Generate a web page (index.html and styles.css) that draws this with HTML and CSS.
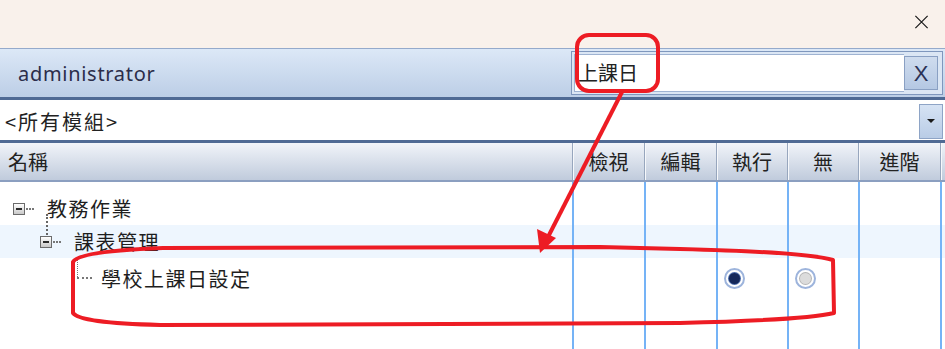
FILE: index.html
```html
<!DOCTYPE html>
<html lang="zh-Hant">
<head>
  <meta charset="UTF-8">
  <title>權限設定</title>
  <link rel="stylesheet" href="styles.css">
</head>
<body>
  <div class="window">
    <div class="titlebar">
      <svg class="close" width="16" height="16" viewBox="0 0 16 16">
        <path d="M1 1 L15 15 M15 1 L1 15" stroke="#1a1a1a" stroke-width="1.4" fill="none"/>
      </svg>
    </div>

    <div class="userbar">
      <span class="user">administrator</span>
      <div class="search">
        <div class="search-field">上課日</div>
        <div class="search-clear">X</div>
      </div>
    </div>

    <div class="module">
      <span class="module-text">&lt;所有模組&gt;</span>
      <div class="drop-btn"><span class="caret"></span></div>
    </div>

    <div class="grid-head">
      <div class="cell name">名稱</div>
      <div class="cell">檢視</div>
      <div class="cell">編輯</div>
      <div class="cell">執行</div>
      <div class="cell">無</div>
      <div class="cell">進階</div>
      <div class="cell"></div>
    </div>

    <div class="grid-body">
      <div class="row spacer">
        <div class="cell name"></div>
        <div class="cell"></div><div class="cell"></div><div class="cell"></div>
        <div class="cell"></div><div class="cell"></div><div class="cell"></div>
      </div>
      <div class="row r1">
        <div class="cell name">
          <span class="node lvl0"><span class="toggle"></span><span class="dots"></span></span>教務作業
        </div>
        <div class="cell"></div><div class="cell"></div><div class="cell"></div>
        <div class="cell"></div><div class="cell"></div><div class="cell"></div>
      </div>
      <div class="row r2 selected">
        <div class="cell name">
          <span class="vline"></span>
          <span class="node lvl1"><span class="toggle"></span><span class="dots"></span></span>課表管理
        </div>
        <div class="cell"></div><div class="cell"></div><div class="cell"></div>
        <div class="cell"></div><div class="cell"></div><div class="cell"></div>
      </div>
      <div class="row r3">
        <div class="cell name">
          <span class="node lvl2"><span class="elbow"></span></span>學校上課日設定
        </div>
        <div class="cell"></div>
        <div class="cell"></div>
        <div class="cell choice"><span class="radio on"></span></div>
        <div class="cell choice"><span class="radio off"></span></div>
        <div class="cell"></div>
        <div class="cell"></div>
      </div>
      <div class="row filler">
        <div class="cell name"></div>
        <div class="cell"></div><div class="cell"></div><div class="cell"></div>
        <div class="cell"></div><div class="cell"></div><div class="cell"></div>
      </div>
    </div>

    <!-- red markup drawn on top of the screenshot -->
    <svg class="markup" width="945" height="349" viewBox="0 0 945 349">
      <g fill="none" stroke="#ed1c24" stroke-width="4" stroke-linejoin="round">
        <rect x="577" y="35" width="81" height="56" rx="12"/>
        <line x1="622" y1="92" x2="548" y2="237"/>
        <path d="M163 248 L600 247 L680 249 Q805 252 833 260 L834 313 Q805 320 680 323 L160 325 Q80 323 73 313 L73 262 Q79 251 163 248 Z"/>
      </g>
      <polygon points="540,253 537,229 556,238" fill="#ed1c24"/>
    </svg>
  </div>
</body>
</html>
```

FILE: styles.css
```css
* {
  box-sizing: border-box;
}

html, body {
  margin: 0;
  height: 100%;
}

body {
  font-family: "Noto Sans", "Noto Sans CJK TC", sans-serif;
  color: #1e1e1e;
  background: #ffffff;
}

.window {
  position: relative;
  width: 945px;
  height: 349px;
  display: flex;
  flex-direction: column;
  overflow: hidden;
}

.titlebar {
  height: 48px;
  flex: none;
  background: #f9f1eb;
  display: flex;
  justify-content: flex-end;
  align-items: center;
  padding-right: 16px;
}

.close {
  width: 15px;
  height: 14px;
  margin-top: -4px;
}

/* user bar with search box */
.userbar {
  height: 52px;
  flex: none;
  display: flex;
  align-items: center;
  justify-content: space-between;
  border-top: 1px solid #95aacb;
  border-bottom: 3px solid #4f6a94;
  background: linear-gradient(#dce8f7, #bccee6);
  padding: 0 2px 0 18px;
}

.user {
  font-size: 20px;
  color: #2b2d4a;
  letter-spacing: 0.7px;
}

.search {
  width: 372px;
  height: 44px;
  border: 1px solid #7f97bd;
  background: #dbe6f4;
  padding: 2px;
  display: flex;
}

.search-field {
  flex: 1;
  background: #ffffff;
  border: 1px solid #9fb3d2;
  border-right: none;
  font-family: "Noto Sans CJK TC", sans-serif;
  font-size: 20px;
  line-height: 36px;
  padding-left: 3px;
  color: #222;
}

.search-clear {
  width: 34px;
  background: linear-gradient(#cfdcee, #b5c8e3);
  border: 1px solid #8aa0c3;
  font-size: 22px;
  line-height: 34px;
  text-align: center;
  color: #2b3256;
  margin: 2px 2px 2px 0;
  font-family: "Liberation Sans", sans-serif;
}

/* module picker */
.module {
  height: 43px;
  flex: none;
  display: flex;
  align-items: center;
  justify-content: space-between;
  background: #ffffff;
  border-bottom: 3px solid #4f6a94;
  padding: 2px 2px 0 5px;
}

.module-text {
  font-family: "Noto Sans CJK TC", sans-serif;
  font-size: 20px;
  letter-spacing: 2px;
  color: #222;
}

.drop-btn {
  width: 24px;
  height: 35px;
  background: linear-gradient(#d6e3f4, #b9cce6);
  border: 1px solid #8ea4c6;
  display: flex;
  align-items: center;
  justify-content: center;
}

.caret {
  width: 0;
  height: 0;
  border-left: 4px solid transparent;
  border-right: 4px solid transparent;
  border-top: 4px solid #1a1a1a;
}

/* grid */
.grid-head,
.row {
  display: grid;
  grid-template-columns: 572px 72px 72px 71px 71px 82px 1fr;
}

.grid-head {
  height: 39px;
  flex: none;
  background: linear-gradient(#f1f4f9, #c0cbdc);
  border-bottom: 2px solid #8b9fc0;
  font-family: "Noto Sans CJK TC", sans-serif;
  font-size: 20px;
}

.grid-head .cell {
  display: flex;
  align-items: center;
  justify-content: center;
  border-left: 1px solid #97a6bd;
  box-shadow: inset 1px 0 0 #f6f8fb;
  color: #222;
}

.grid-head .name {
  justify-content: flex-start;
  padding-left: 8px;
  border-left: none;
  box-shadow: none;
}

.grid-body {
  flex: 1;
  display: flex;
  flex-direction: column;
  font-family: "Noto Sans CJK TC", sans-serif;
  font-size: 20px;
  letter-spacing: 1.5px;
  color: #1e1e1e;
}

.row .cell {
  border-left: 2px solid #75b3f6;
}

.row .name {
  border-left: none;
  position: relative;
  display: flex;
  align-items: center;
}

.row .choice {
  display: flex;
  align-items: center;
  padding-left: 6px;
}

.spacer { height: 10px; }
.r1 { height: 33px; }
.r2 { height: 33px; }
.r3 { height: 40px; }
.filler { flex: 1; }

.selected {
  background: #eef6fe;
}

/* tree connectors */
.node {
  display: inline-flex;
  align-items: center;
  flex: none;
}

.lvl0 { margin-left: 13px; width: 34px; }
.lvl1 { margin-left: 40px; width: 34px; }
.lvl2 { margin-left: 77px; width: 24px; align-self: stretch; position: relative; }

.toggle {
  width: 12px;
  height: 12px;
  border: 1px solid #6b6b6b;
  background: linear-gradient(#ffffff, #c9c9c9);
  position: relative;
  flex: none;
}

.toggle::after {
  content: "";
  position: absolute;
  left: 2px;
  right: 2px;
  top: 4px;
  height: 2px;
  background: #2a2a2a;
}

.dots {
  width: 8px;
  margin-left: 1px;
  border-top: 2px dotted #777;
}

.vline {
  position: absolute;
  left: 46px;
  top: -11px;
  height: 21px;
  border-left: 2px dotted #666;
}

.elbow {
  position: absolute;
  left: 0;
  top: 0;
  width: 15px;
  height: 21px;
  border-left: 1px dotted #777;
  border-bottom: 2px dotted #777;
}

/* radio buttons */
.radio {
  width: 21px;
  height: 21px;
  border-radius: 50%;
  border: 2px solid #9db4dc;
  background: #ffffff;
  display: flex;
  align-items: center;
  justify-content: center;
}

.radio::after {
  content: "";
  width: 11px;
  height: 11px;
  border-radius: 50%;
}

.radio.on::after {
  background: #15285a;
  box-shadow: 0 0 0 1px #4a6aa8;
}

.radio.off::after {
  background: #dcdcdc;
  box-shadow: 0 0 0 1px #b5b5b5;
}

/* annotation overlay */
.markup {
  position: absolute;
  left: 0;
  top: 0;
  pointer-events: none;
}
```
